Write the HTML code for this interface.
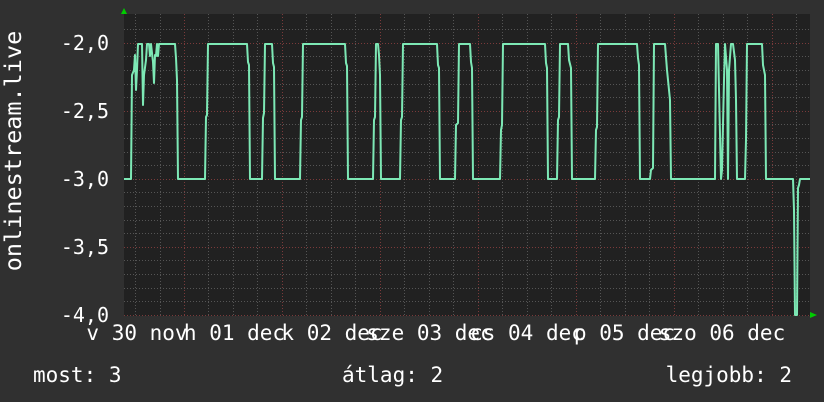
<!DOCTYPE html>
<html><head><meta charset="utf-8"><style>
html,body{margin:0;padding:0;background:#303030;}
svg{display:block}
text{font-family:"DejaVu Sans Mono","Liberation Mono",monospace;fill:#fff}
</style></head><body>
<svg width="824" height="402" viewBox="0 0 824 402" xmlns="http://www.w3.org/2000/svg">
<rect width="824" height="402" fill="#303030"/>
<rect x="124" y="14" width="686" height="302" fill="#212121"/>
<g stroke="#555" stroke-width="1" stroke-dasharray="1,2">
<line x1="124" x2="810" y1="29.5" y2="29.5"/><line x1="124" x2="810" y1="56.5" y2="56.5"/><line x1="124" x2="810" y1="70.5" y2="70.5"/><line x1="124" x2="810" y1="84.5" y2="84.5"/><line x1="124" x2="810" y1="97.5" y2="97.5"/>
<line x1="124" x2="810" y1="124.5" y2="124.5"/><line x1="124" x2="810" y1="138.5" y2="138.5"/><line x1="124" x2="810" y1="152.5" y2="152.5"/><line x1="124" x2="810" y1="165.5" y2="165.5"/>
<line x1="124" x2="810" y1="192.5" y2="192.5"/><line x1="124" x2="810" y1="206.5" y2="206.5"/><line x1="124" x2="810" y1="220.5" y2="220.5"/><line x1="124" x2="810" y1="233.5" y2="233.5"/>
<line x1="124" x2="810" y1="260.5" y2="260.5"/><line x1="124" x2="810" y1="274.5" y2="274.5"/><line x1="124" x2="810" y1="288.5" y2="288.5"/><line x1="124" x2="810" y1="301.5" y2="301.5"/>
<line y1="14" y2="316" x1="135.5" x2="135.5"/><line y1="14" y2="316" x1="160.5" x2="160.5"/><line y1="14" y2="316" x1="208.5" x2="208.5"/><line y1="14" y2="316" x1="233.5" x2="233.5"/><line y1="14" y2="316" x1="257.5" x2="257.5"/>
<line y1="14" y2="316" x1="306.5" x2="306.5"/><line y1="14" y2="316" x1="331.5" x2="331.5"/><line y1="14" y2="316" x1="355.5" x2="355.5"/>
<line y1="14" y2="316" x1="404.5" x2="404.5"/><line y1="14" y2="316" x1="429.5" x2="429.5"/><line y1="14" y2="316" x1="453.5" x2="453.5"/>
<line y1="14" y2="316" x1="502.5" x2="502.5"/><line y1="14" y2="316" x1="527.5" x2="527.5"/><line y1="14" y2="316" x1="551.5" x2="551.5"/>
<line y1="14" y2="316" x1="600.5" x2="600.5"/><line y1="14" y2="316" x1="625.5" x2="625.5"/><line y1="14" y2="316" x1="649.5" x2="649.5"/>
<line y1="14" y2="316" x1="698.5" x2="698.5"/><line y1="14" y2="316" x1="723.5" x2="723.5"/><line y1="14" y2="316" x1="747.5" x2="747.5"/><line y1="14" y2="316" x1="796.5" x2="796.5"/>
</g>
<g stroke="#7a3a3a" stroke-width="1" stroke-dasharray="1,2">
<line x1="124" x2="810" y1="43.5" y2="43.5"/><line x1="124" x2="810" y1="111.5" y2="111.5"/><line x1="124" x2="810" y1="179.5" y2="179.5"/><line x1="124" x2="810" y1="247.5" y2="247.5"/><line x1="124" x2="810" y1="315.5" y2="315.5"/>
<line y1="14" y2="316" x1="184.5" x2="184.5"/><line y1="14" y2="316" x1="282.5" x2="282.5"/><line y1="14" y2="316" x1="380.5" x2="380.5"/><line y1="14" y2="316" x1="478.5" x2="478.5"/><line y1="14" y2="316" x1="576.5" x2="576.5"/><line y1="14" y2="316" x1="674.5" x2="674.5"/><line y1="14" y2="316" x1="772.5" x2="772.5"/>
</g>
<polyline fill="none" stroke="#7de8b5" stroke-width="2" stroke-linejoin="round" points="124,179 131,179 132,75 134,70 135,55 136,90 137,70 138,44 142,44 143,105 144,75 146,60 147,44 149,44 150,56 151,44 153,62 154,83 155,55 156,56 157,44 158,56 159,44 161,44 175,44 176,58 177,80 178,179 205,179 206,117 207,115 208,44 247,44 248,62 249,65 250,179 262,179 263,118 264,113 265,44 272,44 273,63 274,67 275,179 300,179 301,120 302,117 303,44 345,44 346,63 347,66 348,179 373,179 374,120 375,117 376,44 378,44 379,55 380,75 381,179 400,179 401,120 402,117 403,44 437,44 438,65 439,68 440,179 455,179 456,125 458,123 459,44 470,44 471,62 472,68 473,179 500,179 501,130 502,125 503,44 545,44 546,63 547,68 548,179 557,179 558,120 559,117 560,44 568,44 569,60 571,68 572,179 595,179 596,130 597,127 598,44 637,44 638,58 639,65 640,179 650,179 651,170 653,168 654,44 665,44 667,70 670,100 671,179 715,179 716,44 718,44 719,90 721,179 722,170 724,80 725,44 727,70 728,179 729,70 731,44 733,44 735,60 736,100 737,179 745,179 746,140 747,44 762,44 763,65 765,75 766,179 793,179 794,210 795,315 797,315 798,188 799,185 800,179 810,179"/>
<polygon points="121,14 127,14 124,8" fill="#00cc00"/>
<polygon points="810,312 810,318 817,315" fill="#00cc00"/>
<g font-size="20" text-anchor="end">
<text x="109" y="50">-2,0</text><text x="109" y="118">-2,5</text><text x="109" y="186">-3,0</text><text x="109" y="254">-3,5</text><text x="109" y="322">-4,0</text>
</g>
<text font-size="23.5" transform="translate(21,151) rotate(-90)" text-anchor="middle">onlinestream.live</text>
<g font-size="21" text-anchor="middle">
<text x="137" y="340">v 30 nov</text>
<text x="234.5" y="340">h 01 dec</text>
<text x="332" y="340">k 02 dec</text>
<text x="429.5" y="340">sze 03 dec</text>
<text x="527" y="340">cs 04 dec</text>
<text x="624.5" y="340">p 05 dec</text>
<text x="722" y="340">szo 06 dec</text>
</g>
<g font-size="21">
<text x="33" y="382">most: 3</text>
<text x="342" y="382">átlag: 2</text>
<text x="792" y="382" text-anchor="end">legjobb: 2</text>
</g>
</svg>
</body></html>
